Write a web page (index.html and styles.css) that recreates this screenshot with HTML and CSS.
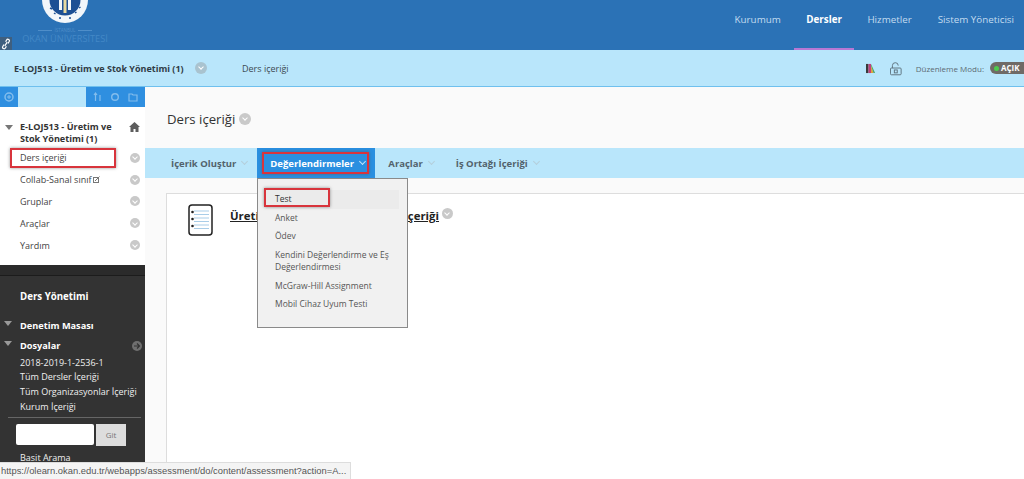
FILE: index.html
```html
<!DOCTYPE html>
<html lang="tr">
<head>
<meta charset="utf-8">
<title>Ders içeriği</title>
<link rel="stylesheet" href="styles.css">
</head>
<body>
<header class="top">
  <div class="logo">
    <svg class="crest" width="48" height="24" viewBox="0 0 48 24">
      <circle cx="24" cy="0" r="23" fill="#f2f6fa"/>
      <circle cx="24" cy="0" r="15.5" fill="#1c4f94"/>
      <path d="M18 0h3v10h-3zM27 0h3v10h-3z" fill="#f2f6fa"/>
      <path d="M22.500 0h3v13h-3z" fill="#e6d9a0"/>
      <path d="M9 8l2 1M13 13l1.500 1M18 18h2M28 18h2M34 13l1.500-1M38 8l1.500-1" stroke="#1c4f94" stroke-width="1.500"/>
    </svg>
    <div class="logo-city">İSTANBUL</div>
    <div class="logo-name">OKAN ÜNİVERSİTESİ</div>
  </div>
  <nav class="topnav">
    <a class="tab">Kurumum</a>
    <a class="tab tab-on">Dersler</a>
    <a class="tab">Hizmetler</a>
    <a class="tab">Sistem Yöneticisi</a>
  </nav>
  <div class="linkbadge">
    <svg width="10" height="12" viewBox="0 0 10 12"><path d="M3 6.500 1.800 8.500a1.500 1.500 0 0 0 2.600 1.500l1-1.800M7 5.500l1.200-2a1.500 1.500 0 0 0-2.600-1.500l-1 1.800M3.800 7.800l2.400-3.600" fill="none" stroke="#fff" stroke-width="1.200"/></svg>
  </div>
</header>

<div class="crumbs">
  <div class="crumb-left">
    <span class="course">E-LOJ513 - Üretim ve Stok Yönetimi (1)</span>
    <span class="chev chev-crumb"></span>
    <span class="crumb-page">Ders içeriği</span>
  </div>
  <div class="crumb-right">
    <svg class="swatch" width="11" height="11" viewBox="0 0 11 11"><path d="M0 0h3v11H0z" fill="#3a3a3a"/><path d="M3 0h3v11H3z" fill="#c23f7b"/><path d="M6 2l3 9H6z" fill="#e0a23a"/><path d="M6 0l5 11H9L6 2z" fill="#4aa56a"/></svg>
    <svg class="lock" width="14" height="15" viewBox="1 0 12 14"><rect x="1.500" y="6.500" width="11" height="7" rx="1" fill="none" stroke="#5f7480"/><path d="M3.500 6.500V4a3 3 0 0 1 6 0" fill="none" stroke="#5f7480"/><rect x="5.500" y="8.500" width="3" height="3" fill="none" stroke="#5f7480"/></svg>
    <span class="edit-label">Düzenleme Modu:</span>
    <span class="edit-pill"><i class="dot"></i>AÇIK</span>
  </div>
</div>

<div class="body">
  <aside class="side">
    <div class="side-tools">
      <span class="tool-cell"><svg width="10" height="10" viewBox="0 0 10 10"><circle cx="5" cy="5" r="4" fill="none" stroke="#84bdec" stroke-width="1.500"/><path d="M3 5h4M5 3v4" stroke="#84bdec"/></svg></span>
      <span class="tool-blank"></span>
      <span class="tool-group">
        <svg width="10" height="10" viewBox="0 0 10 10"><path d="M2.500 1v8M7 3v6M1 3l1.500-2L4 3" fill="none" stroke="#84bdec" stroke-width="1.200"/></svg>
        <svg width="10" height="10" viewBox="0 0 10 10"><circle cx="5" cy="5" r="3.300" fill="none" stroke="#84bdec" stroke-width="1.400"/></svg>
        <svg width="10" height="10" viewBox="0 0 10 10"><path d="M1 2h3l1 1h4v6H1z" fill="none" stroke="#84bdec" stroke-width="1.200"/></svg>
      </span>
    </div>
    <div class="course-menu">
      <div class="course-head">
        <span class="tri tri-gray"></span>
        <span class="course-title">E-LOJ513 - Üretim ve Stok Yönetimi (1)</span>
        <svg class="home" width="11" height="10" viewBox="0 0 11 10"><path d="M5.500 0 11 5H9.500v5H6.500V7h-2v3H1.500V5H0z" fill="#5d5d5d"/></svg>
      </div>
      <ul class="menu-list">
        <li class="menu-item"><span>Ders içeriği</span><span class="chev"></span></li>
        <li class="menu-item"><span>Collab-Sanal sınıf<svg class="ext" width="7" height="7" viewBox="0 0 7 7"><rect x=".5" y="1.500" width="5" height="5" fill="none" stroke="#777"/><path d="M2 5l4.500-4.500" stroke="#777"/></svg></span><span class="chev"></span></li>
        <li class="menu-item"><span>Gruplar</span><span class="chev"></span></li>
        <li class="menu-item"><span>Araçlar</span><span class="chev"></span></li>
        <li class="menu-item"><span>Yardım</span><span class="chev"></span></li>
      </ul>
    </div>
    <div class="admin">
      <div class="admin-strip"></div>
      <div class="admin-title">Ders Yönetimi</div>
      <div class="admin-head admin-head-first"><span class="tri"></span>Denetim Masası</div>
      <div class="admin-head"><span class="tri"></span>Dosyalar<svg class="go" width="10" height="10" viewBox="0 0 10 10"><circle cx="5" cy="5" r="5" fill="#6f6f6f"/><path d="M2 5h5M5 2.500 7.500 5 5 7.500" fill="none" stroke="#333" stroke-width="1.200"/></svg></div>
      <ul class="admin-list">
        <li>2018-2019-1-2536-1</li>
        <li>Tüm Dersler İçeriği</li>
        <li>Tüm Organizasyonlar İçeriği</li>
        <li>Kurum İçeriği</li>
      </ul>
      <div class="search">
        <span class="search-box"></span>
        <span class="search-btn">Git</span>
      </div>
      <div class="admin-link">Basit Arama</div>
    </div>
  </aside>
  <main class="main">
    <h1 class="page-title">Ders içeriği<span class="chev chev-title"></span></h1>
    <div class="actionbar">
      <span class="action">İçerik Oluştur<i class="caret"></i></span>
      <span class="action action-on">Değerlendirmeler<i class="caret caret-on"></i></span>
      <span class="action">Araçlar<i class="caret"></i></span>
      <span class="action">İş Ortağı İçeriği<i class="caret"></i></span>
    </div>
    <section class="content">
      <div class="content-row">
        <svg class="note" width="25" height="32" viewBox="0 0 25 32">
          <rect x="1" y="1" width="23" height="30" rx="3" fill="#fff" stroke="#222" stroke-width="1.500"/>
          <path d="M6 7h15M6 10.500h15M6 14h15M6 17.500h15M6 21h15M6 24.500h15" stroke="#a9cde8"/>
          <circle cx="4.500" cy="8" r="1.300" fill="#222"/><circle cx="4.500" cy="15" r="1.300" fill="#222"/><circle cx="4.500" cy="22" r="1.300" fill="#222"/>
        </svg>
        <a class="content-link">Üretim ve Stok Yönetimi Dersi içeriği</a>
        <span class="chev chev-link"></span>
      </div>
    </section>
  </main>
</div>

<div class="mark mark-side"></div>
<div class="mark mark-action"></div>

<div class="dropdown">
  <ul class="drop-list">
    <li class="drop-item drop-hover">Test</li>
    <li class="drop-item">Anket</li>
    <li class="drop-item">Ödev</li>
    <li class="drop-item">Kendini Değerlendirme ve Eş Değerlendirmesi</li>
    <li class="drop-item">McGraw-Hill Assignment</li>
    <li class="drop-item">Mobil Cihaz Uyum Testi</li>
  </ul>
</div>
<div class="mark mark-test"></div>

<div class="status">https://olearn.okan.edu.tr/webapps/assessment/do/content/assessment?action=A...</div>
</body>
</html>
```

FILE: styles.css
```css
* { box-sizing: border-box; }
html, body { margin: 0; padding: 0; }
body {
  width: 1024px;
  height: 479px;
  overflow: hidden;
  position: relative;
  font-family: "Open Sans", "Noto Sans", sans-serif;
  background: #fff;
  color: #333;
}
ul { list-style: none; margin: 0; padding: 0; }

/* top header */
.top {
  height: 50px;
  background: #2b72b6;
  display: flex;
  justify-content: space-between;
  position: relative;
}
.logo {
  width: 130px;
  display: flex;
  flex-direction: column;
  align-items: center;
  line-height: 1;
}
.crest { display: block; }
.logo-city {
  font-size: 4.500px;
  color: #4f8ec9;
  margin-top: 3px;
  height: 6px;
  display: flex;
  align-items: center;
  gap: 3px;
}
.logo-city::before, .logo-city::after {
  content: "";
  width: 14px;
  height: 1px;
  background: #4f8ec9;
}
.logo-name { font-size: 9.200px; color: #4388c6; margin-top: 1px; }
.topnav { display: flex; height: 50px; margin-right: -3px; }
.tab {
  font-size: 9.800px;
  color: #c3dcf0;
  padding: 12px 13px 0;
  line-height: 15px;
  white-space: nowrap;
}
.tab-on {
  color: #fff;
  font-weight: 700;
  border-bottom: 2px solid #b878d4;
  padding: 12px 12.500px 0;
}
.linkbadge {
  position: absolute;
  left: 0;
  top: 37px;
  width: 12px;
  height: 13px;
  background: #3f5f7f;
  display: flex;
  align-items: center;
  justify-content: center;
}

/* breadcrumb */
.crumbs {
  height: 37px;
  background: #b9e6fb;
  border-bottom: 1px solid #6fc0ee;
  display: flex;
  justify-content: space-between;
  align-items: center;
  padding-left: 14px;
}
.crumb-left { display: flex; align-items: center; }
.course { font-size: 9px; font-weight: 700; color: #2f3b45; width: 181px; white-space: nowrap; }
.crumb-page { font-size: 9px; color: #3d4a52; margin-left: 35px; }
.crumb-right { display: flex; align-items: center; width: 160px; height: 100%; overflow: hidden; flex: none; }
.swatch { margin-left: 2px; }
.lock { margin-left: 15px; }
.edit-label { font-size: 8px; color: #5d6b73; margin-left: 14px; white-space: nowrap; }
.edit-pill {
  margin-left: 6px;
  background: #6f6a66;
  color: #fff;
  font-size: 8px;
  font-weight: 700;
  border-radius: 6px 0 0 6px;
  height: 12px;
  line-height: 12px;
  padding-left: 4px;
  width: 34px;
  display: flex;
  align-items: center;
  gap: 2px;
  white-space: nowrap;
  flex: none;
}
.dot { width: 5px; height: 5px; border-radius: 50%; background: #4ecb4e; display: block; flex: none; }

/* shared chevron circle */
.chev {
  display: block;
  width: 10px;
  height: 10px;
  border-radius: 50%;
  background: #c9c9c9;
  position: relative;
  flex: none;
}
.chev::after {
  content: "";
  position: absolute;
  left: 3px;
  top: 2.500px;
  width: 3px;
  height: 3px;
  border-right: 1px solid #fff;
  border-bottom: 1px solid #fff;
  transform: rotate(45deg);
}
.chev-crumb { background: #a9c3cf; width: 12px; height: 12px; }
.chev-crumb::after { left: 4px; top: 3px; }

/* body */
.body { display: flex; height: 392px; }
.side { width: 145px; flex: none; display: flex; flex-direction: column; background: #fff; }
.side-tools { display: flex; height: 20px; background: #2f8fe0; flex: none; }
.tool-cell { width: 18px; display: flex; align-items: center; justify-content: center; }
.tool-blank { width: 68px; background: #b9e6fb; }
.tool-group { flex: 1; display: flex; align-items: center; justify-content: space-around; padding: 0 3px; }

.course-menu { height: 158px; padding-top: 14px; flex: none; }
.course-head { display: flex; align-items: flex-start; padding: 0 5px; }
.tri {
  display: block;
  width: 0;
  height: 0;
  border-left: 4px solid transparent;
  border-right: 4px solid transparent;
  border-top: 5px solid #999;
  flex: none;
}
.tri-gray { border-top-color: #777; margin-top: 4px; }
.course-title {
  font-size: 9.100px;
  line-height: 12px;
  font-weight: 700;
  color: #333;
  margin-left: 7px;
  width: 100px;
}
.home { margin-left: auto; margin-top: 1px; }
.menu-list { margin-top: 2px; }
.menu-item {
  height: 21.800px;
  display: flex;
  justify-content: space-between;
  align-items: center;
  padding: 0 5px 0 20px;
  font-size: 9px;
  color: #444;
}
.ext { margin-left: 2px; }

.admin { flex: 1; background: #333; color: #fff; overflow: hidden; }
.admin-strip { height: 11px; border-bottom: 1px solid #1c1c1c; background: #2b2b2b; }
.admin-title { font-size: 9.700px; font-weight: 700; padding: 14px 0 0 20px; line-height: 14px; }
.admin-head {
  font-size: 9.200px;
  font-weight: 700;
  line-height: 13px;
  padding-left: 20px;
  margin-top: 7px;
  position: relative;
  display: flex;
  align-items: center;
}
.admin-head-first { margin-top: 14.500px; }
.admin-head .tri { position: absolute; left: 4px; top: 2px; }
.go { position: absolute; right: 3px; top: 2px; }
.admin-list { padding: 4px 0 0 20px; font-size: 9px; line-height: 14.800px; color: #f0f0f0; }
.search {
  margin: 2px 4px 0 8px;
  border-top: 1px solid #666;
  padding: 6px 0 0 8px;
  display: flex;
  gap: 2px;
}
.search-box { width: 78px; height: 21px; background: #fff; border-radius: 2px; }
.search-btn {
  width: 30px;
  height: 22px;
  background: #ddd;
  color: #777;
  font-size: 8px;
  text-align: center;
  line-height: 22px;
}
.admin-link { font-size: 9px; padding: 5px 0 0 20px; color: #eee; }

.main { flex: 1; background: #fafafa; min-width: 0; }
.page-title {
  margin: 0;
  height: 61px;
  padding: 21px 0 0 22px;
  font-size: 13.200px;
  font-weight: 400;
  line-height: 22px;
  color: #333;
  display: flex;
  align-items: flex-start;
}
.chev-title { width: 12px; height: 12px; margin: 5px 0 0 4px; }
.chev-title::after { left: 4px; top: 3px; }
.actionbar {
  height: 30px;
  background: #b9e6fb;
  display: flex;
  font-size: 9.500px;
  font-weight: 700;
  padding-left: 12px;
}
.action { display: flex; align-items: center; padding: 0 15px 0 14px; color: #52626c; white-space: nowrap; }
.action:first-child { padding-left: 14px; padding-right: 8px; }
.action-on {
  background: #2a8fe0;
  color: #fff;
  width: 118px;
  padding: 0 0 0 13px;
  margin-left: 2px;
}
.action-on + .action { padding-left: 13px; padding-right: 8px; }
.caret {
  display: block;
  width: 5px;
  height: 5px;
  border-right: 1px solid #b4cfdb;
  border-bottom: 1px solid #b4cfdb;
  transform: rotate(45deg);
  margin: -3px 0 0 6px;
}
.caret-on { border-color: #bde3fb; }

.content {
  margin: 15px 0 0 21px;
  background: #fff;
  border: 1px solid #ddd;
  border-right: 0;
  height: 290px;
  padding: 10px 0 0 21px;
}
.content-row { display: flex; align-items: flex-start; }
.note { flex: none; }
.content-link {
  font-size: 11.400px;
  font-weight: 700;
  color: #222;
  text-decoration: underline;
  margin: 4px 3px 0 17px;
  line-height: 15px;
  white-space: nowrap;
}
.chev-link { margin-top: 4px; width: 11px; height: 11px; }

/* overlays */
.mark {
  position: absolute;
  border: 2px solid #d8343c;
  box-shadow: 0 0 3px rgba(80, 80, 80, .6);
}
.mark-side { left: 10px; top: 148px; width: 106px; height: 20px; }
.mark-action { left: 262px; top: 152px; width: 107px; height: 22px; }
.mark-test { left: 264px; top: 188px; width: 66px; height: 19px; }

.dropdown {
  position: absolute;
  left: 257px;
  top: 178px;
  width: 151px;
  height: 150px;
  background: #f1f1f1;
  border: 1px solid #8a8a8a;
  padding: 11px 8px 0 8px;
  font-size: 8.500px;
  color: #555;
}
.drop-item { padding: 3.300px 8px 3.300px 9px; line-height: 12px; }
.drop-hover { background: #ebebeb; color: #333; }
.status {
  position: absolute;
  left: 0;
  bottom: 0;
  width: 351px;
  height: 17px;
  background: #f4f4f4;
  border: 1px solid #ddd;
  border-left: 0;
  border-bottom: 0;
  font-family: "Liberation Sans", Arial, sans-serif;
  font-size: 9.400px;
  line-height: 16px;
  color: #555;
  padding-left: 1px;
  white-space: nowrap;
  overflow: hidden;
}
```
